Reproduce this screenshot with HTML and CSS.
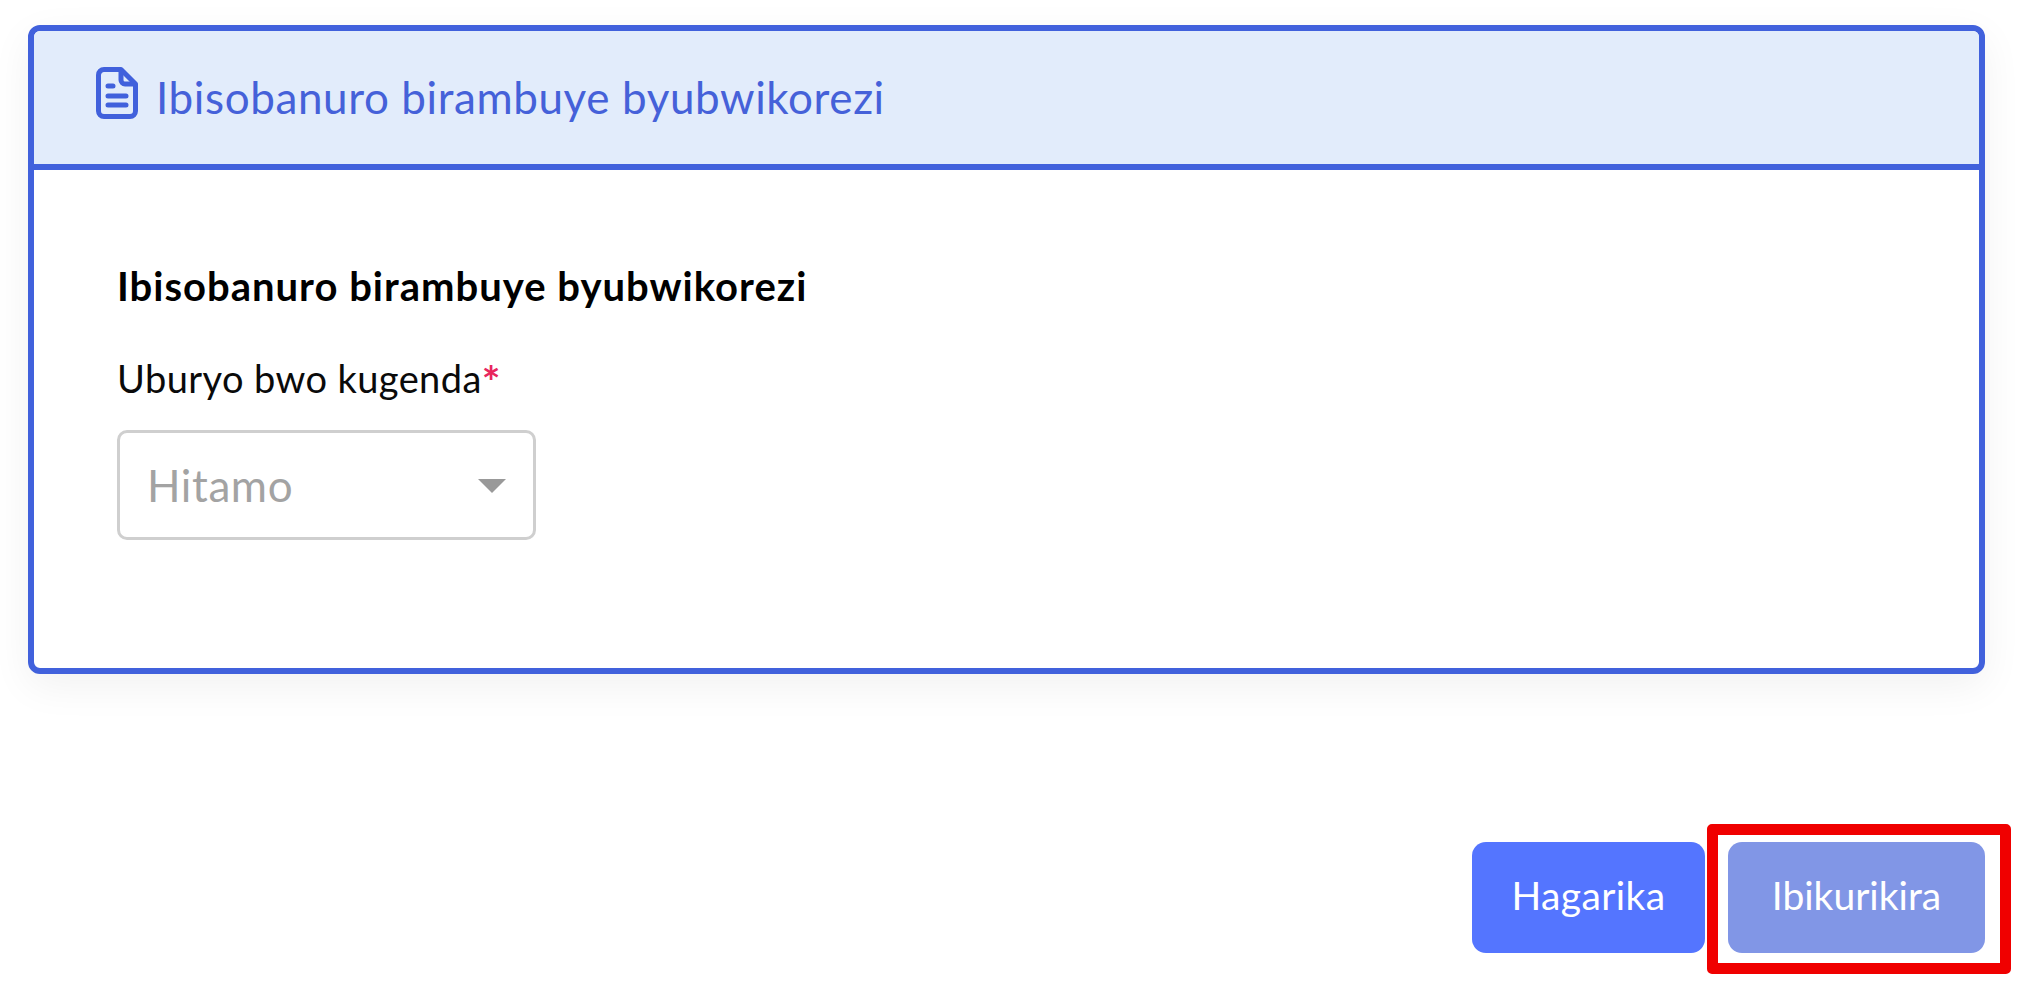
FILE: index.html
```html
<!DOCTYPE html>
<html lang="rw">
<head>
<meta charset="utf-8">
<title>Ibisobanuro birambuye byubwikorezi</title>
<link rel="stylesheet" href="styles.css">
</head>
<body>
<main class="page">
  <section class="card">
    <header class="card-header">
      <svg class="doc-icon" viewBox="0 0 42 52" aria-hidden="true">
        <path class="doc-outline" d="M8 2.500H25L39.500 17V44A5.500 5.500 0 0 1 34 49.500H8A5.500 5.500 0 0 1 2.500 44V8A5.500 5.500 0 0 1 8 2.500Z"/>
        <path class="doc-outline" d="M25 2.500V13A4 4 0 0 0 29 17H39.500"/>
        <path class="doc-lines" d="M12 19H17M12 29H30M12 38H30"/>
      </svg>
      <h1 class="card-title">Ibisobanuro birambuye byubwikorezi</h1>
    </header>
    <div class="card-body">
      <h2 class="section-title">Ibisobanuro birambuye byubwikorezi</h2>
      <label class="field-label">Uburyo bwo kugenda<span class="required">*</span></label>
      <div class="select">
        <span class="select-value">Hitamo</span>
        <span class="select-arrow"></span>
      </div>
    </div>
  </section>
  <footer class="actions">
    <button class="btn" type="button">Hagarika</button>
    <div class="btn-wrap">
      <button class="btn btn-disabled" type="button">Ibikurikira</button>
      <span class="highlight"></span>
    </div>
  </footer>
</main>
</body>
</html>
```
FILE: styles.css
```css
* { box-sizing: border-box; }
html, body { margin: 0; height: 100%; background: #fff; }
body { font-family: "Lato", "Noto Sans", sans-serif; overflow: hidden; }
.page { padding: 25px 58px 0 28px; }
.card {
  border: 6px solid #4161dc;
  border-radius: 12px;
  height: 649px;
  overflow: hidden;
  background: #fff;
  box-shadow: 0 12px 40px rgba(0, 0, 0, .06);
}
.card-header {
  display: flex;
  align-items: center;
  gap: 18px;
  height: 139px;
  padding: 0 0 2px 62px;
  background: #e2ecfb;
  border-bottom: 6px solid #4161dc;
}
.doc-icon { width: 42px; height: 52px; flex: none; margin-bottom: 7px; }
.doc-outline { fill: none; stroke: #4161dc; stroke-width: 5; stroke-linejoin: round; }
.doc-lines { fill: none; stroke: #4161dc; stroke-width: 5; stroke-linecap: round; }
.card-title { margin: 0; font-size: 44px; font-weight: 400; letter-spacing: .6px; color: #4561d9; line-height: 1; }
.card-body { padding: 94px 0 0 83px; }
.section-title { margin: 0; font-size: 40px; font-weight: 700; letter-spacing: 1px; color: #000; line-height: 44px; }
.field-label { display: block; margin-top: 48px; font-size: 38px; letter-spacing: .4px; color: #0a0a0a; line-height: 44px; }
.required { position: relative; top: 5px; color: #e8265e; font-size: 44px; font-weight: 700; line-height: 0; letter-spacing: 0; }
.select {
  display: flex;
  align-items: center;
  justify-content: space-between;
  width: 419px;
  height: 110px;
  margin-top: 30px;
  padding: 0 27px 0 27px;
  border: 3px solid #cfcfcf;
  border-radius: 10px;
}
.select-value { font-size: 44px; letter-spacing: .6px; color: #a3a3a3; }
.select-arrow {
  width: 0;
  height: 0;
  margin-top: 2px;
  border-left: 14px solid transparent;
  border-right: 14px solid transparent;
  border-top: 14px solid #999;
}
.actions { display: flex; justify-content: flex-end; gap: 23px; margin-top: 168px; }
.btn {
  height: 111px;
  width: 233px;
  padding: 0 0 5px;
  border: 0;
  border-radius: 14px;
  background: #5475ff;
  color: #fff;
  font: 400 39px "Lato", "Noto Sans", sans-serif;
  letter-spacing: .4px;
}
.btn-disabled { width: 257px; background: #8196e6; display: block; letter-spacing: 0; }
.btn-wrap { position: relative; }
.highlight {
  position: absolute;
  left: -21px;
  top: -18px;
  width: 304px;
  height: 150px;
  border: 11px solid #f00000;
  border-radius: 5px;
  pointer-events: none;
}
```
